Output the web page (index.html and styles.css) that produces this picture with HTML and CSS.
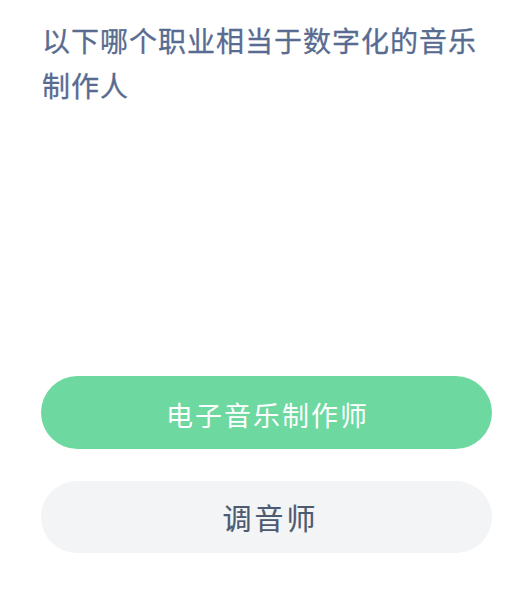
FILE: index.html
```html
<!DOCTYPE html>
<html lang="zh">
<head>
<meta charset="utf-8">
<link rel="stylesheet" href="styles.css">
</head>
<body>
<main class="page">
  <h1 class="question">以下哪个职业相当于数字化的音乐制作人</h1>
  <div class="options">
    <button class="option option-correct">电子音乐制作师</button>
    <button class="option option-plain">调音师</button>
  </div>
</main>
</body>
</html>
```
FILE: styles.css
```css
html, body {
  margin: 0;
  padding: 0;
  background: #ffffff;
}
.page {
  width: 510px;
  height: 599px;
  box-sizing: border-box;
  padding: 18px 18px 0 42px;
  font-family: "Noto Sans CJK SC", sans-serif;
}
.question {
  margin: 0;
  width: 450px;
  font-size: 28px;
  font-weight: 400;
  line-height: 45px;
  letter-spacing: 1px;
  color: #586b90;
  -webkit-text-stroke: 0.3px #586b90;
}
.options {
  margin-top: 268px;
  margin-left: -1px;
  display: flex;
  flex-direction: column;
  gap: 32px;
}
.option {
  width: 451px;
  height: 73px;
  border: none;
  border-radius: 37px;
  font-family: "Noto Sans CJK SC", sans-serif;
  display: flex;
  align-items: center;
  justify-content: center;
}
.option-correct {
  background: #6dd89f;
  color: #ffffff;
  font-size: 27px;
  letter-spacing: 2px;
  padding: 3px 0 0 2px;
}
.option-plain {
  background: #f3f4f6;
  color: #4d5a70;
  font-size: 29px;
  letter-spacing: 3px;
  padding: 0 0 0 8px;
  height: 72px;
  -webkit-text-stroke: 0.2px #4d5a70;
}
```
